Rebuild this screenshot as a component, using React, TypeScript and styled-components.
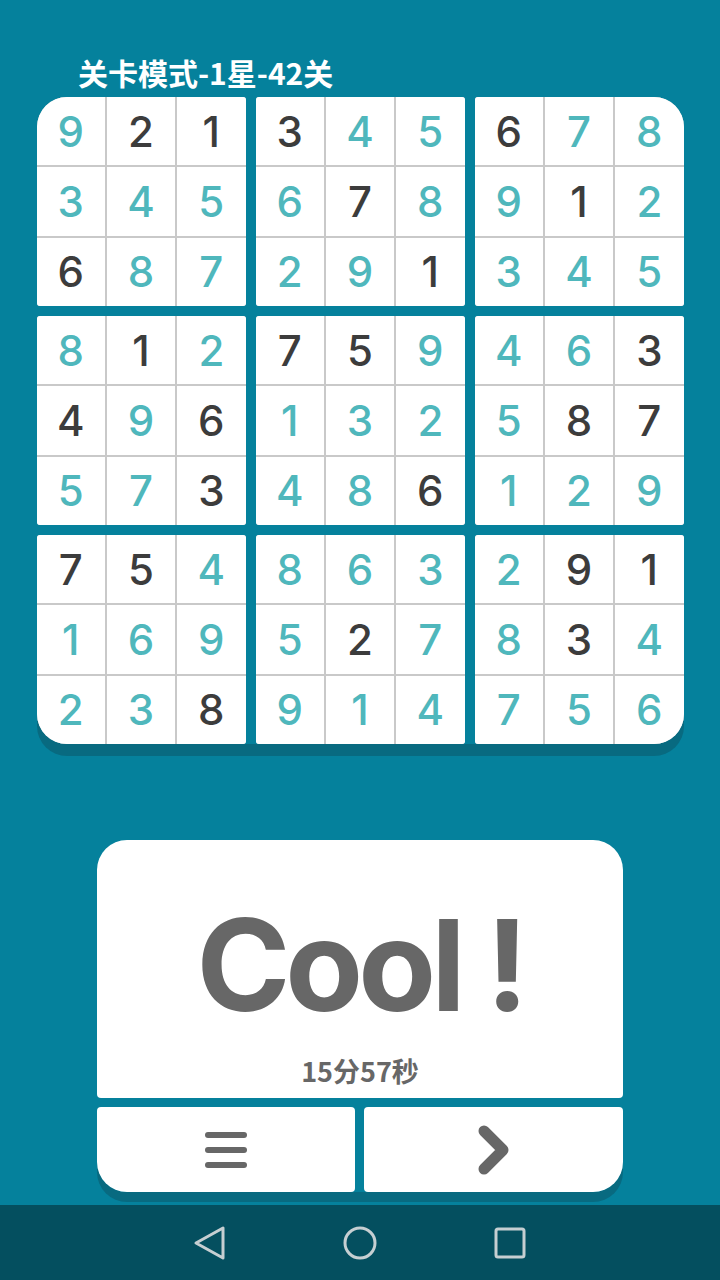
import React from "react";
import styled, { createGlobalStyle } from "styled-components";

const BG = "#05819c";
const SHADOW = "#086a80";
const TEAL = "#4fb7bc";
const DARK = "#3c3c3c";
const GRAY = "#676767";

const GlobalStyle = createGlobalStyle`
  html, body {
    margin: 0;
    padding: 0;
    background: ${BG};
  }
  * { box-sizing: border-box; }
`;

// row digits and which ones are the given (dark) ones
const rows = [
  ["921345678", "011100100"],
  ["345678912", "000010010"],
  ["687291345", "100001000"],
  ["812759463", "010110001"],
  ["496132587", "101000011"],
  ["573486129", "001001000"],
  ["754863291", "110000011"],
  ["169527834", "000010010"],
  ["238914756", "001000000"],
];

const Screen = styled.div`
  width: 720px;
  height: 1280px;
  display: flex;
  flex-direction: column;
  background: ${BG};
  font-family: Inter, "Noto Sans", "Noto Sans CJK SC", sans-serif;
`;

const Title = styled.div`
  padding: 53px 0 0 78px;
  height: 97px;
  font-family: "Noto Sans CJK SC", "Noto Sans", sans-serif;
  font-weight: 700;
  font-size: 30px;
  line-height: 38px;
  color: #fff;
`;

const Board = styled.div`
  align-self: center;
  width: 647px;
  display: grid;
  grid-template-columns: repeat(3, 209px);
  grid-template-rows: repeat(3, 209px);
  gap: 10px;
  border-radius: 30px;
  box-shadow: 0 12px 0 ${SHADOW};
`;

const Box = styled.div<{ $radius: string }>`
  display: grid;
  grid-template-columns: repeat(3, 1fr);
  grid-template-rows: repeat(3, 1fr);
  gap: 2px;
  background: #c9c9c9;
  border-radius: ${(p) => p.$radius};
  overflow: hidden;
`;

const Cell = styled.div<{ $given: boolean }>`
  background: #fff;
  display: flex;
  align-items: center;
  justify-content: center;
  font-size: 42px;
  font-weight: 500;
  color: ${(p) => (p.$given ? DARK : TEAL)};
`;

const Panel = styled.div`
  align-self: center;
  margin-top: 96px;
  width: 526px;
  display: flex;
  flex-direction: column;
  gap: 9px;
  border-radius: 30px;
  box-shadow: 0 10px 0 ${SHADOW};
`;

const Card = styled.div`
  height: 258px;
  background: #fff;
  border-radius: 30px 30px 4px 4px;
  display: flex;
  flex-direction: column;
  align-items: center;
  color: ${GRAY};
`;

const Cool = styled.div`
  margin-top: 62px;
  font-size: 127px;
  font-weight: 700;
  line-height: 1;
  letter-spacing: -5px;
`;

const Time = styled.div`
  margin-top: 25px;
  font-family: "Noto Sans CJK SC", "Noto Sans", sans-serif;
  font-size: 27px;
  font-weight: 700;
  line-height: 34px;
`;

const ButtonRow = styled.div`
  display: grid;
  grid-template-columns: 258px 259px;
  gap: 9px;
  height: 85px;
`;

const Button = styled.div<{ $side: "left" | "right" }>`
  background: #fff;
  display: flex;
  align-items: center;
  justify-content: center;
  border-radius: ${(p) => (p.$side === "left" ? "4px 4px 4px 30px" : "4px 4px 30px 4px")};
`;

const NavBar = styled.div`
  margin-top: auto;
  height: 75px;
  background: #044f5f;
  display: flex;
  align-items: center;
  justify-content: center;
  gap: 110px;
`;

const boxRadius = (bi: number) => {
  if (bi === 0) return "30px 3px 3px 3px";
  if (bi === 2) return "3px 30px 3px 3px";
  if (bi === 6) return "3px 3px 3px 30px";
  if (bi === 8) return "3px 3px 30px 3px";
  return "3px";
};

export default function App() {
  const boxes = Array.from({ length: 9 }, (_, bi) => {
    const br = Math.floor(bi / 3) * 3;
    const bc = (bi % 3) * 3;
    const cells = [];
    for (let r = 0; r < 3; r++) {
      for (let c = 0; c < 3; c++) {
        const [digits, mask] = rows[br + r];
        cells.push(
          <Cell key={r * 3 + c} $given={mask[bc + c] === "1"}>
            {digits[bc + c]}
          </Cell>
        );
      }
    }
    return (
      <Box key={bi} $radius={boxRadius(bi)}>
        {cells}
      </Box>
    );
  });

  return (
    <Screen>
      <GlobalStyle />
      <Title>关卡模式-1星-42关</Title>
      <Board>{boxes}</Board>
      <Panel>
        <Card>
          <Cool>Cool !</Cool>
          <Time>15分57秒</Time>
        </Card>
        <ButtonRow>
          <Button $side="left">
            <svg width="44" height="38" viewBox="0 0 44 38">
              <g stroke={GRAY} strokeWidth="6" strokeLinecap="round">
                <line x1="4" y1="4" x2="40" y2="4" />
                <line x1="4" y1="19" x2="40" y2="19" />
                <line x1="4" y1="34" x2="40" y2="34" />
              </g>
            </svg>
          </Button>
          <Button $side="right">
            <svg width="36" height="52" viewBox="0 0 36 52">
              <polyline
                points="8,7 27,26 8,45"
                fill="none"
                stroke={GRAY}
                strokeWidth="11"
                strokeLinecap="round"
                strokeLinejoin="round"
              />
            </svg>
          </Button>
        </ButtonRow>
      </Panel>
      <NavBar>
        <svg width="40" height="40" viewBox="0 0 40 40">
          <path
            d="M33 5 L33 35 L6 20 Z"
            fill="none"
            stroke="#c6cfd2"
            strokeWidth="3"
            strokeLinejoin="round"
          />
        </svg>
        <svg width="40" height="40" viewBox="0 0 40 40">
          <circle cx="20" cy="20" r="15" fill="none" stroke="#c6cfd2" strokeWidth="3" />
        </svg>
        <svg width="40" height="40" viewBox="0 0 40 40">
          <rect x="6" y="6" width="28" height="28" rx="2" fill="none" stroke="#c6cfd2" strokeWidth="3" />
        </svg>
      </NavBar>
    </Screen>
  );
}
